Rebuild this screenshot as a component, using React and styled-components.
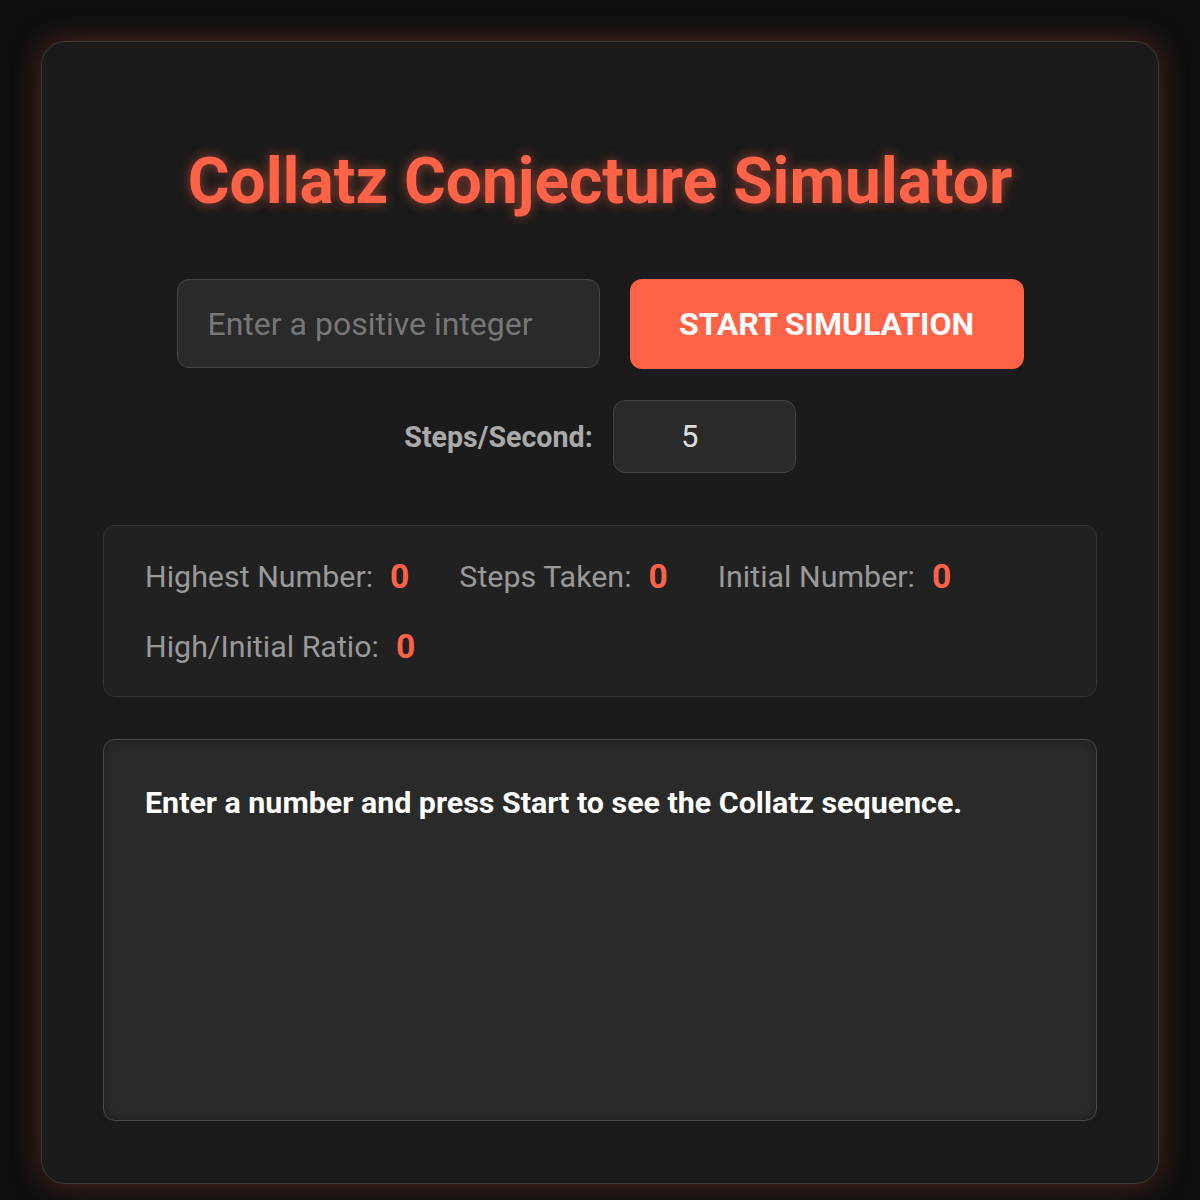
import React, { useState } from "react";
import styled, { createGlobalStyle } from "styled-components";

const GlobalStyle = createGlobalStyle`
  * { box-sizing: border-box; }
  body {
    margin: 0;
    padding: 41px;
    background: #0f0f0f;
    font-family: Roboto, "Liberation Sans", sans-serif;
    color: #eee;
  }
  input[type="number"]::-webkit-inner-spin-button { opacity: 0; }
`;

const Container = styled.div`
  display: flex;
  flex-direction: column;
  align-items: center;
  padding: 0 61px 62px;
  background: #1b1b1b;
  border: 1px solid #3a3a3a;
  border-radius: 24px;
  box-shadow: 0 0 30px rgba(255, 99, 71, 0.28);
`;

const Title = styled.h1`
  margin: 107px 0 64px;
  font-size: 64px;
  line-height: 66px;
  font-weight: 700;
  color: #ff6347;
  text-shadow: 0 0 12px rgba(255, 99, 71, 0.55);
`;

const Controls = styled.div`
  display: flex;
  justify-content: center;
  gap: 30px;
`;

const TextInput = styled.input`
  width: 423px;
  height: 89px;
  padding: 0 30px;
  background: #2a2a2a;
  border: 1px solid #444;
  border-radius: 12px;
  color: #eee;
  font-family: inherit;
  font-size: 32px;
  outline: none;
  &::placeholder { color: #777; }
`;

const StartButton = styled.button`
  width: 394px;
  height: 90px;
  background: #ff6347;
  border: none;
  border-radius: 12px;
  color: #fff;
  font-family: inherit;
  font-size: 32px;
  font-weight: 700;
  text-transform: uppercase;
  cursor: pointer;
`;

const SpeedRow = styled.div`
  display: flex;
  align-items: center;
  gap: 20px;
  margin-top: 31px;
`;

const SpeedLabel = styled.label`
  font-size: 28.6px;
  font-weight: 700;
  color: #aaa;
`;

const SpeedInput = styled.input`
  width: 183px;
  height: 73px;
  padding: 0 16px 0 2px;
  background: #2a2a2a;
  border: 1px solid #444;
  border-radius: 12px;
  color: #ddd;
  font-family: inherit;
  font-size: 31px;
  text-align: center;
  outline: none;
`;

const Stats = styled.div`
  align-self: stretch;
  display: flex;
  flex-wrap: wrap;
  column-gap: 50px;
  row-gap: 30px;
  margin-top: 52px;
  padding: 30px 41px;
  background: #212121;
  border: 1px solid #353535;
  border-radius: 12px;
`;

const Stat = styled.div`
  display: flex;
  align-items: center;
  height: 40px;
  font-size: 30.4px;
  color: #999;
`;

const Value = styled.span`
  margin-left: 17px;
  font-size: 33.6px;
  font-weight: 700;
  color: #ff6347;
`;

const Output = styled.div`
  align-self: stretch;
  height: 382px;
  margin-top: 42px;
  padding: 40px 41px;
  background: #2a2a2a;
  border: 1px solid #484848;
  border-radius: 12px;
  box-shadow: inset 0 0 12px rgba(0, 0, 0, 0.35);
  font-size: 30.4px;
  line-height: 1.5;
  font-weight: 700;
  color: #fff;
`;

const stats = [
  ["Highest Number:", 0],
  ["Steps Taken:", 0],
  ["Initial Number:", 0],
  ["High/Initial Ratio:", 0],
];

export default function App() {
  const [start, setStart] = useState("");
  const [speed, setSpeed] = useState(5);

  return (
    <>
      <GlobalStyle />
      <Container>
        <Title>Collatz Conjecture Simulator</Title>
        <Controls>
          <TextInput
            type="number"
            placeholder="Enter a positive integer"
            value={start}
            onChange={(e) => setStart(e.target.value)}
          />
          <StartButton>Start Simulation</StartButton>
        </Controls>
        <SpeedRow>
          <SpeedLabel htmlFor="speed">Steps/Second:</SpeedLabel>
          <SpeedInput
            id="speed"
            type="number"
            value={speed}
            onChange={(e) => setSpeed(e.target.value)}
          />
        </SpeedRow>
        <Stats>
          {stats.map(([label, value]) => (
            <Stat key={label}>
              {label}
              <Value>{value}</Value>
            </Stat>
          ))}
        </Stats>
        <Output>Enter a number and press Start to see the Collatz sequence.</Output>
      </Container>
    </>
  );
}
